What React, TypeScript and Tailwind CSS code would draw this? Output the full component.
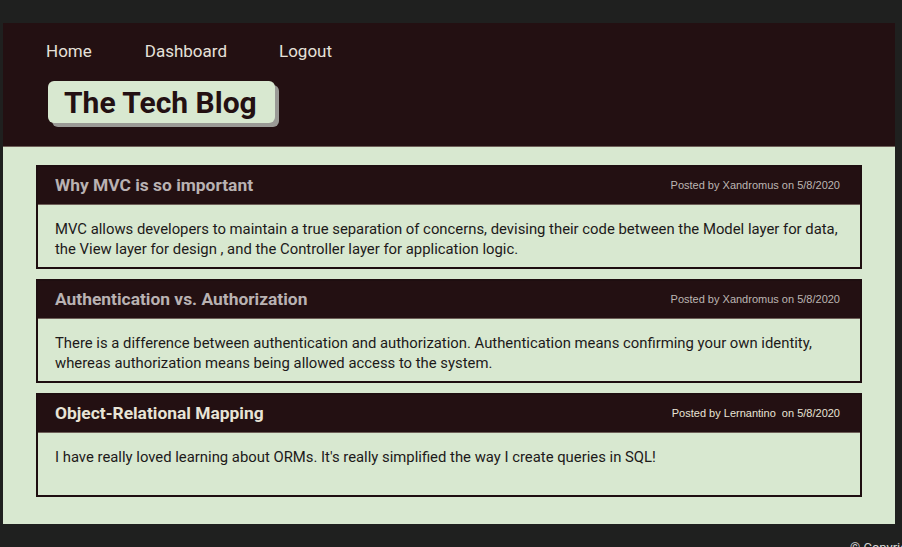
import React from 'react';

interface Post {
  id: number;
  title: string;
  author: string;
  date: string;
  body: string;
  light?: boolean;
}

const posts: Post[] = [
  {
    id: 1,
    title: 'Why MVC is so important',
    author: 'Xandromus',
    date: '5/8/2020',
    body: 'MVC allows developers to maintain a true separation of concerns, devising their code between the Model layer for data, the View layer for design , and the Controller layer for application logic.',
  },
  {
    id: 2,
    title: 'Authentication vs. Authorization',
    author: 'Xandromus',
    date: '5/8/2020',
    body: 'There is a difference between authentication and authorization. Authentication means confirming your own identity, whereas authorization means being allowed access to the system.',
  },
  {
    id: 3,
    title: 'Object-Relational Mapping',
    author: 'Lernantino ',
    date: '5/8/2020',
    body: "I have really loved learning about ORMs. It's really simplified the way I create queries in SQL!",
    light: true,
  },
];

const App: React.FC = () => {
  return (
    <div className="min-h-screen bg-[#1f201f] pt-[23px] pl-[3px] pr-[7px] font-['Roboto',sans-serif]">
      {/* Header */}
      <header className="h-[124px] bg-[#231012] border-b border-[#6d5f58] pl-[43px] pt-[16px]">
        <nav className="flex gap-[52px] text-[17px] leading-[24px] text-[#e6e1da]">
          <a href="#">Home</a>
          <a href="#" className="ml-[1px]">Dashboard</a>
          <a href="#">Logout</a>
        </nav>
        <div className="mt-[18px] ml-[2px] inline-block rounded-md bg-[#d8e8d0] pl-[16px] pr-[18px] h-[42px] shadow-[4px_4px_0_#9a9a96]">
          <h1 className="text-[30px] leading-[44px] font-bold text-[#231012]">The Tech Blog</h1>
        </div>
      </header>

      {/* Posts */}
      <main className="bg-[#d8e8d0] px-[33px] pt-[18px] pb-[27px] flex flex-col gap-[10px]">
        {posts.map((post) => (
          <article key={post.id} className="border-2 border-[#1e0e10]">
            <div className="h-[38px] bg-[#231012] flex items-center justify-between pl-[17px] pr-[20px] border-b border-[#6d5f58]">
              <h2 className={`text-[17.4px] font-bold ${post.light ? 'text-[#e8e4d6]' : 'text-[#b9b2b2]'}`}>
                {post.title}
              </h2>
              <span className={`text-[11px] font-['Liberation_Sans',sans-serif] whitespace-pre ${post.light ? 'text-[#e8e4d6]' : 'text-[#bdb6b2]'}`}>
                Posted by {post.author} on {post.date}
              </span>
            </div>
            <div className="h-[62px] pl-[17px] pr-[10px] pt-[14px] text-[14.85px] leading-[20px] text-[#1d1a1a]">
              <p>{post.body}</p>
            </div>
          </article>
        ))}
      </main>

      <footer className="h-[23px] flex justify-end pt-[14px] mr-[-7px] overflow-hidden">
        <span className="text-[13px] text-[#d6d6d6] w-[52px] overflow-hidden whitespace-nowrap">© Copyright</span>
      </footer>
    </div>
  );
};

export default App;
